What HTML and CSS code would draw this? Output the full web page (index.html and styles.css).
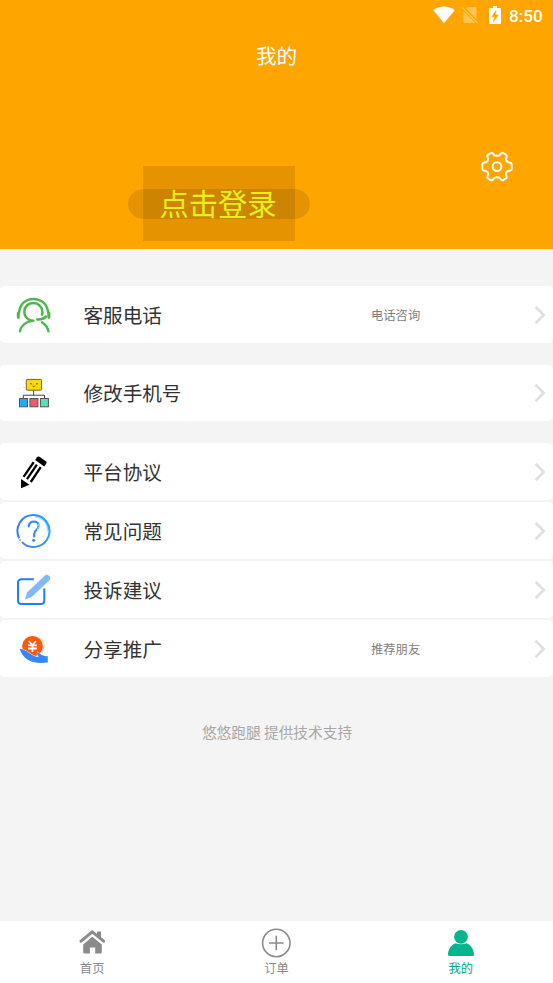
FILE: index.html
```html
<!DOCTYPE html>
<html lang="zh-CN">
<head>
<meta charset="utf-8">
<meta name="viewport" content="width=device-width, initial-scale=1">
<title>我的</title>
<link rel="stylesheet" href="styles.css">
</head>
<body>
<div class="app">
  <header class="header">
    <div class="status">
      <svg width="22" height="18" viewBox="0 0 22 18"><path d="M0.3 4.2C6.5-.7 15.5-.7 21.7 4.2L11 17.3Z" fill="#fff"/></svg>
      <svg class="sim" width="18" height="18" viewBox="0 0 18 18"><path d="M6.5 1H15.5V13.2L5 2.6ZM2.5 5L14.5 17H2.5Z" fill="#ffc453"/><path d="M1 1.5L16.5 17" stroke="#ffc453" stroke-width="1.4"/></svg>
      <svg class="battery" width="12" height="18" viewBox="0 0 12 18"><path d="M4 0H8V2H11Q12 2 12 3V17Q12 18 11 18H1Q0 18 0 17V3Q0 2 1 2H4Z" fill="#fff"/><path d="M7 4.5L2.8 10.8H5.5L4.6 15.5L9.2 9H6.4Z" fill="#ffa500" stroke="#ffa500" stroke-width=".6"/></svg>
      <span class="clock">8:50</span>
    </div>
    <h1 class="title">我的</h1>
    <div class="profile">
      <div class="login-pill"><div class="login-box">点击登录</div></div>
      <svg class="gear" width="32" height="32" viewBox="0 0 32 32" fill="none" stroke="#fff" stroke-width="2" stroke-linejoin="round"><path d="M11.9 2.5L13.2 4.1Q16 5.6 18.8 4.1L20.1 2.5Q21 1.4 22.2 2.1L24.9 3.7Q26 4.4 25.6 5.6L24.8 8.2Q25 10.4 27.2 11.3L29.5 11.8Q30.7 12.1 30.7 13.4V17.8Q30.7 19.1 29.5 19.4L27.2 19.9Q25 20.8 24.8 23L25.6 25.6Q26 26.8 24.9 27.5L22.2 29.1Q21 29.8 20.1 28.7L18.8 27.1Q16 25.6 13.2 27.1L11.9 28.7Q11 29.8 9.8 29.1L7.1 27.5Q6 26.8 6.4 25.6L7.2 23Q7 20.8 4.8 19.9L2.5 19.4Q1.3 19.1 1.3 17.8V13.4Q1.3 12.1 2.5 11.8L4.8 11.3Q7 10.4 7.2 8.2L6.4 5.6Q6 4.4 7.1 3.7L9.8 2.1Q11 1.4 11.9 2.5Z"/><circle cx="16" cy="15.6" r="4.4"/></svg>
    </div>
  </header>

  <main class="content">
    <section class="group">
      <a class="row">
        <svg class="icon" viewBox="0 0 36 36" fill="none" stroke="#4cb84c" stroke-width="2.5" stroke-linecap="round"><path d="M2.3 16V20.2M32.9 16V20.2" stroke-width="3"/><path d="M3 15.5C4 6.7 10 1.9 17.5 1.9S31.2 6.7 32.2 15.5"/><path d="M17.3 23.8C12 23.6 8.3 19.5 8.3 14.9C8.3 9.7 12.2 6 17.3 6S26.4 9.9 26.4 15Q26.4 16.5 25.9 17.7M17.3 23.8C10.5 24.2 5.4 28.2 3.9 34.2M26 25.3Q31.2 28.7 32.5 34.2M21.2 22.4Q27 22.7 30.2 19.5"/></svg>
        <span class="label">客服电话</span><span class="note">电话咨询</span>
        <svg class="chevron" viewBox="0 0 12 20"><path d="M1.5 1.8L9.8 10L1.5 18.2"/></svg>
      </a>
    </section>
    <section class="group">
      <a class="row">
        <svg class="icon" viewBox="0 0 36 36"><rect x="10.3" y="4.4" width="15.2" height="10.8" rx=".8" fill="#fbd90b" stroke="#756422" stroke-width="1"/><path d="M14 8.8H16M20 8.8H22" stroke="#695c20"/><path d="M16 10.8H19.6Q18 13.2 16 10.8Z" fill="#cd5a25"/><path d="M17.6 15.5V20M7.3 23V20.2H28.5V23" stroke="#444" stroke-width="1" fill="none"/><g stroke="#555" stroke-width="1"><rect x="3.5" y="23.5" width="8" height="8.3" fill="#22a9fa"/><rect x="13.9" y="23.5" width="8" height="8.3" fill="#ef596b"/><rect x="24.4" y="23.5" width="8" height="8.3" fill="#4de4ba"/></g><g fill="#f5c96f"><circle cx="6.5" cy="4.7" r=".5"/><circle cx="31.5" cy="6" r=".5"/><circle cx="4" cy="14" r=".5"/><circle cx="29" cy="16" r=".6"/></g><g fill="#91cfe9"><circle cx="8" cy="12.4" r=".6"/><circle cx="8" cy="17" r=".6"/></g></svg>
        <span class="label">修改手机号</span>
        <svg class="chevron" viewBox="0 0 12 20"><path d="M1.5 1.8L9.8 10L1.5 18.2"/></svg>
      </a>
    </section>
    <section class="group">
      <a class="row">
        <svg class="icon" viewBox="0 0 36 36"><path d="M5 34.2V25L13.5 30.8Z"/><path d="M7.6 22.8L17.7 8.1M11 25.2L20.9 10.6M14.8 28L24.7 13.1" stroke="#000" stroke-width="2.3"/><path d="M19.2 6L21 3.2Q22 1.8 23.5 2.8L29.8 7.2Q31.2 8.2 30.2 9.7L28.2 12.5Z"/></svg>
        <span class="label">平台协议</span>
        <svg class="chevron" viewBox="0 0 12 20"><path d="M1.5 1.8L9.8 10L1.5 18.2"/></svg>
      </a>
      <a class="row">
        <svg class="icon" viewBox="0 0 36 36" fill="none"><defs><linearGradient id="blue" x1="0" x2="1"><stop stop-color="#3d79f5"/><stop offset="1" stop-color="#26a3ff"/></linearGradient></defs><path d="M19 3.7Q31.4 5 31.8 18" stroke="#80e0ff" stroke-width="1.6"/><path d="M3.2 25.2A16 16 0 1 1 6 29.1" stroke="url(#blue)" stroke-width="2"/><circle cx="4" cy="27" r=".8" fill="#3d79f5"/><path d="M12.7 13.4Q13.2 8.5 18 8.5Q22.8 8.7 22.6 13C22.5 16.7 18.2 17 18.2 21V23.5" stroke="#3489fa" stroke-width="2.2" stroke-linecap="round"/><path d="M22.5 10.5Q24.5 14 21 17" stroke="#9de2ff" stroke-width="1"/><circle cx="17.6" cy="27.3" r="1.5" fill="#3489fa"/></svg>
        <span class="label">常见问题</span>
        <svg class="chevron" viewBox="0 0 12 20"><path d="M1.5 1.8L9.8 10L1.5 18.2"/></svg>
      </a>
      <a class="row">
        <svg class="icon" viewBox="0 0 36 36"><path d="M17.8 7.2H5.5Q2 7.2 2 10.7V28.5Q2 32 5.5 32H25Q28.3 32 28.3 28.5V16.5" fill="none" stroke="#237dff" stroke-width="2"/><path d="M9 27.5L11 20.5L28.6 3.8Q31 1.8 33.3 4Q35.4 6.4 33.2 8.6L15.6 25.1Z" fill="#80b9ff"/></svg>
        <span class="label">投诉建议</span>
        <svg class="chevron" viewBox="0 0 12 20"><path d="M1.5 1.8L9.8 10L1.5 18.2"/></svg>
      </a>
      <a class="row">
        <svg class="icon" viewBox="0 0 36 36"><circle cx="18.5" cy="15.5" r="10.1" fill="#ffd7c5"/><circle cx="16.4" cy="15.2" r="10.3" fill="#ff570c"/><path d="M12.8 10L16.4 14.1L20 10M16.4 14V21M12 14.4H20.8M12 17.5H20.8" fill="none" stroke="#fff" stroke-width="1.8"/><path d="M3.6 17.8C8 18 12.5 21.5 15.5 23.5C18 25 20.5 26 22.8 25.8Q20.2 23 21.6 20.7C24 22.5 25.6 25.2 31.8 25.2V31.6C19 33.4 7.2 30.3 3.6 17.8Z" fill="#3388ff" stroke="#fff" stroke-width="1" paint-order="stroke"/></svg>
        <span class="label">分享推广</span><span class="note">推荐朋友</span>
        <svg class="chevron" viewBox="0 0 12 20"><path d="M1.5 1.8L9.8 10L1.5 18.2"/></svg>
      </a>
    </section>
    <p class="support">悠悠跑腿 提供技术支持</p>
  </main>

  <nav class="tabs">
    <a class="tab">
      <svg width="30" height="30" viewBox="0 0 30 30" fill="#8a8a8a"><path d="M15.3 8.8L24.8 16.5V24Q24.8 25.5 23.4 25.5H18.2V19.4H12.9V25.5H7.7Q6.2 25.5 6.2 24V16.5Z"/><path d="M4 13.2L15.3 3.9L26.6 13.2" fill="none" stroke="#8a8a8a" stroke-width="3" stroke-linecap="round" stroke-linejoin="round"/><path d="M20 3.6H24V10.5L20 7Z"/></svg>
      <span>首页</span>
    </a>
    <a class="tab">
      <svg width="30" height="30" viewBox="0 0 30 30" fill="none" stroke="#8a8a8a" stroke-width="1.6"><circle cx="15.3" cy="15" r="13.7"/><path d="M8 15H22.6M15.3 7.7V22.3"/></svg>
      <span>订单</span>
    </a>
    <a class="tab active">
      <svg width="30" height="30" viewBox="0 0 30 30" fill="#05b58b"><circle cx="15" cy="8.8" r="6.9"/><path d="M9.5 15.3Q15 17 20.5 15.3C25 17 28 22 28 26.5Q28 28 26.5 28H3.5Q2 28 2 26.5C2 22 5 17 9.5 15.3Z"/></svg>
      <span>我的</span>
    </a>
  </nav>
</div>
</body>
</html>
```
FILE: styles.css
```css
* {
  box-sizing: border-box;
}

body {
  margin: 0;
  font-family: "Noto Sans CJK SC", sans-serif;
  color: #333;
}

svg {
  display: block;
  flex: none;
}

.app {
  height: 983px;
  display: flex;
  flex-direction: column;
  background: #f4f4f4;
}

.header {
  height: 249px;
  flex: none;
  display: flex;
  flex-direction: column;
  background: #ffa500;
}

.status {
  height: 30px;
  flex: none;
  display: flex;
  justify-content: flex-end;
  align-items: center;
  padding-right: 10px;
}

.sim {
  margin-left: 6px;
}

.battery {
  margin-left: 10px;
}

.clock {
  width: 34px;
  margin-left: 8px;
  padding-top: 2px;
  font: 500 17.2px/20px Roboto, sans-serif;
  color: #fff;
}

.title {
  margin: 0;
  height: 52px;
  flex: none;
  line-height: 50px;
  font-size: 20.6px;
  font-weight: 400;
  text-align: center;
  color: #fff;
}

.profile {
  flex: 1;
  display: flex;
  align-items: flex-start;
  padding: 69px 40px 0 128px;
}

.login-pill {
  width: 182px;
  height: 30px;
  margin-top: 38px;
  display: flex;
  align-items: center;
  justify-content: center;
  border-radius: 15px;
  background: rgba(0, 0, 0, .1);
}

.login-box {
  flex: none;
  width: 152px;
  height: 75px;
  margin-bottom: 1px;
  padding-right: 2px;
  line-height: 72px;
  font-size: 29.3px;
  text-align: center;
  color: #e6f019;
  background: rgba(0, 0, 0, .1);
}

.gear {
  margin-left: auto;
}

.content {
  flex: 1;
  padding-top: 37.3px;
}

.group {
  display: grid;
  gap: 2.5px;
  margin-bottom: 22px;
}

.row {
  height: 56.5px;
  display: grid;
  grid-template-columns: 36px 287px 1fr 12px;
  align-items: center;
  padding: 0 7px 0 16px;
  border-radius: 5px;
  background: #fff;
}

.icon {
  width: 36px;
  height: 36px;
}

.label {
  padding-left: 31.5px;
  font-size: 19.6px;
  line-height: 30px;
}

.note {
  padding-left: 32px;
  font-size: 12.3px;
  color: #808080;
}

.chevron {
  grid-column: 4;
  width: 12px;
  height: 20px;
  fill: none;
  stroke: #e0e0e0;
  stroke-width: 2.7;
}

.support {
  margin: 44.5px 0 0;
  padding-left: 1px;
  font-size: 14.7px;
  line-height: 22px;
  text-align: center;
  color: #a8a8a8;
}

.tabs {
  height: 62px;
  flex: none;
  display: grid;
  grid-template-columns: repeat(3, 1fr);
  background: #fff;
}

.tab {
  display: flex;
  flex-direction: column;
  align-items: center;
  padding-top: 7px;
  font-size: 12.3px;
  line-height: 20px;
  color: #8a8a8a;
}

.active {
  color: #05a878;
}
```
